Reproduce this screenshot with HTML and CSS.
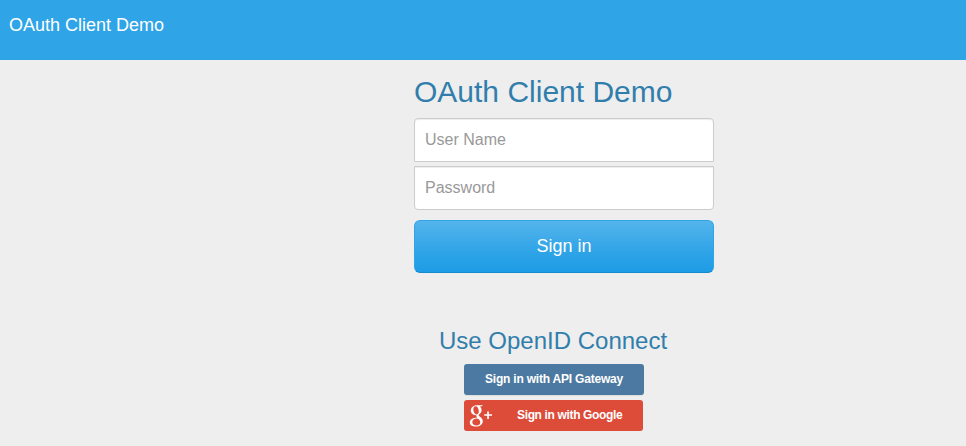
FILE: index.html
```html
<!DOCTYPE html>
<html lang="en">
<head>
<meta charset="utf-8">
<title>OAuth Client Demo</title>
<link rel="stylesheet" href="styles.css">
</head>
<body>
<header class="navbar"><a class="brand">OAuth Client Demo</a></header>
<main class="content">
  <form class="signin">
    <h1 class="title">OAuth Client Demo</h1>
    <input class="field field-first" type="text" placeholder="User Name">
    <input class="field field-last" type="password" placeholder="Password">
    <button class="submit" type="button">Sign in</button>
  </form>
  <section class="openid">
    <h2 class="subtitle">Use OpenID Connect</h2>
    <a class="social gateway"><span class="label">Sign in with API Gateway</span></a>
    <a class="social google">
      <svg class="gplus" width="24" height="24" viewBox="0 0 24 24" aria-hidden="true">
        <path fill="#fff" fill-rule="evenodd" d="M7.6 1.2H14L12.4 2.4H10.8C12 3.4 12.6 4.7 12.6 6.3C12.6 8.1 11.6 9.2 10.5 10.1C9.4 11 9.5 11.5 10.6 12.4C12.8 13.9 13.8 15.2 13.8 17.2C13.8 20.2 11 22.5 6.9 22.5C3.2 22.5 .8 20.9 .8 18.4C.8 15.3 4.1 13.6 8.1 13.4C7.5 12.7 7.2 12.1 7.5 11.3C4.2 11.5 1.8 9.3 1.8 6.6C1.8 3.5 4.5 1.2 7.6 1.2ZM6.7 2.2C4.9 2.3 4.1 4 4.4 6.3C4.8 8.9 6.2 10.5 7.7 10.4C9.4 10.2 10 8.7 9.7 6.4C9.3 3.8 8.2 2.1 6.7 2.2ZM8.5 14.4C5.3 14.3 3.3 15.8 3.3 17.9C3.3 20 5 21.4 7.6 21.4C10.1 21.4 11.3 20.2 11.3 18.2C11.3 16.5 10.4 15.6 8.5 14.4Z"/>
        <path fill="#fff" d="M18.2 7.4H19.9V10.2H23V11.8H19.9V15H18.2V11.8H15.2V10.2H18.2Z"/>
      </svg>
      <span class="label google-label">Sign in with Google</span>
    </a>
  </section>
</main>
</body>
</html>
```
FILE: styles.css
```css
* { box-sizing: border-box; }
body {
  margin: 0;
  background: #eee;
  font-family: "Liberation Sans", Arial, sans-serif;
}
.navbar {
  height: 60px;
  padding: 15px 9px;
  background: #2fa4e7;
}
.brand {
  display: block;
  color: #fff;
  font-size: 18px;
  line-height: 20px;
}
.content {
  width: 300px;
  margin-left: 414px;
}
.signin {
  display: flex;
  flex-direction: column;
  padding-top: 15px;
}
.title, .subtitle {
  margin: 0;
  color: #317eac;
  font-weight: 400;
  white-space: nowrap;
}
.title {
  margin-bottom: 10px;
  font-size: 30px;
  line-height: 33px;
}
.field {
  width: 100%;
  height: 44px;
  padding: 10px;
  border: 1px solid #ccc;
  background: #fff;
  box-shadow: inset 0 1px 1px rgba(0, 0, 0, .075);
  font: 16px "Liberation Sans", Arial, sans-serif;
}
.field::placeholder { color: #999; opacity: 1; }
.field-first { margin-bottom: 4px; border-radius: 4px 4px 0 0; }
.field-last { margin-bottom: 10px; border-radius: 0 0 4px 4px; }
.submit {
  height: 53px;
  padding: 0;
  border: 1px solid #2fa4e7;
  border-bottom-color: #178acc;
  border-radius: 6px;
  background: linear-gradient(#54b4eb, #2fa4e7 60%, #1d9ce5);
  color: #fff;
  font: 18px "Liberation Sans", Arial, sans-serif;
}
.openid {
  padding: 55px 0 0 25px;
}
.subtitle {
  margin-bottom: 10px;
  font-size: 24px;
  line-height: 26px;
}
.social {
  display: flex;
  align-items: center;
  height: 31px;
  margin-left: 25px;
  border-radius: 3px;
  box-shadow: 0 1px 0 rgba(0, 0, 0, .07);
  color: #fff;
  font-size: 12px;
  font-weight: 700;
}
.label {
  padding-bottom: 2px;
  letter-spacing: -.2px;
  white-space: nowrap;
}
.gateway {
  justify-content: center;
  width: 180px;
  margin-bottom: 5px;
  background: #4c79a1;
}
.google {
  width: 179px;
  padding-left: 5px;
  background: #dd4b39;
}
.google-label {
  margin-left: 24px;
  letter-spacing: -.35px;
}
```
